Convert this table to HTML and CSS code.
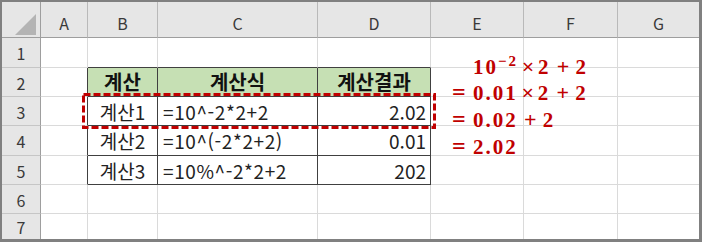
FILE: index.html
```html
<!DOCTYPE html>
<html lang="ko">
<head>
  <meta charset="UTF-8">
  <title>계산 순서</title>
  <link rel="stylesheet" href="styles.css">
</head>
<body>
  <div class="sheet">
    <div class="grid">
      <!-- column headers -->
      <div class="cell corner"><span class="corner-mark"></span></div>
      <div class="cell ch">A</div>
      <div class="cell ch">B</div>
      <div class="cell ch">C</div>
      <div class="cell ch">D</div>
      <div class="cell ch">E</div>
      <div class="cell ch">F</div>
      <div class="cell ch last-col">G</div>

      <!-- row 1 -->
      <div class="cell rh">1</div>
      <div class="cell"></div>
      <div class="cell tt"></div>
      <div class="cell tt"></div>
      <div class="cell tt"></div>
      <div class="cell"></div>
      <div class="cell"></div>
      <div class="cell last-col"></div>

      <!-- row 2 -->
      <div class="cell rh">2</div>
      <div class="cell tl"></div>
      <div class="cell tb th">계산</div>
      <div class="cell tb th">계산식</div>
      <div class="cell tb th">계산결과</div>
      <div class="cell"></div>
      <div class="cell"></div>
      <div class="cell last-col"></div>

      <!-- row 3 -->
      <div class="cell rh">3</div>
      <div class="cell tl"></div>
      <div class="cell tb mid">계산1</div>
      <div class="cell tb formula">=10^-2*2+2</div>
      <div class="cell tb num">2.02</div>
      <div class="cell"></div>
      <div class="cell"></div>
      <div class="cell last-col"></div>

      <!-- row 4 -->
      <div class="cell rh">4</div>
      <div class="cell tl"></div>
      <div class="cell tb mid">계산2</div>
      <div class="cell tb formula">=10^(-2*2+2)</div>
      <div class="cell tb num">0.01</div>
      <div class="cell"></div>
      <div class="cell"></div>
      <div class="cell last-col"></div>

      <!-- row 5 -->
      <div class="cell rh">5</div>
      <div class="cell tl"></div>
      <div class="cell tb mid">계산3</div>
      <div class="cell tb formula">=10%^-2*2+2</div>
      <div class="cell tb num">202</div>
      <div class="cell"></div>
      <div class="cell"></div>
      <div class="cell last-col"></div>

      <!-- row 6 -->
      <div class="cell rh">6</div>
      <div class="cell"></div>
      <div class="cell"></div>
      <div class="cell"></div>
      <div class="cell"></div>
      <div class="cell"></div>
      <div class="cell"></div>
      <div class="cell last-col"></div>

      <!-- row 7 -->
      <div class="cell rh last-row">7</div>
      <div class="cell last-row"></div>
      <div class="cell last-row"></div>
      <div class="cell last-row"></div>
      <div class="cell last-row"></div>
      <div class="cell last-row"></div>
      <div class="cell last-row"></div>
      <div class="cell last-row last-col"></div>
    </div>

    <!-- dashed box around row 3 -->
    <svg class="mark" width="354" height="36" viewBox="0 0 354 36">
      <rect x="1.5" y="1.5" width="351" height="33" fill="none" stroke="#c00000" stroke-width="3" stroke-dasharray="7 3"/>
    </svg>

    <!-- worked steps -->
    <div class="eq">
      <div class="eq-line first"><span class="eq-sign"></span><span class="eq-num">10<sup>−2</sup></span><span class="op op-x">×</span><span class="eq-num">2</span><span class="op op-plus">+</span><span class="eq-num">2</span></div>
      <div class="eq-line"><span class="eq-sign">=</span><span class="eq-num">0.01</span><span class="op op-x">×</span><span class="eq-num">2</span><span class="op op-plus">+</span><span class="eq-num">2</span></div>
      <div class="eq-line"><span class="eq-sign">=</span><span class="eq-num">0.02</span><span class="op op-plus">+</span><span class="eq-num">2</span></div>
      <div class="eq-line"><span class="eq-sign">=</span><span class="eq-num">2.02</span></div>
    </div>
  </div>
</body>
</html>
```

FILE: styles.css
```css
body {
  margin: 0;
  background: #fff;
}
.sheet {
  position: relative;
  width: 702px;
  height: 242px;
  box-sizing: border-box;
  border-style: solid;
  border-color: #808080;
  border-width: 2px 3px 3px 2px;
  background: #fff;
  overflow: hidden;
}
.grid {
  display: grid;
  grid-template-columns: 39px 47px 70px 160px 113px 93px 94px 1fr;
  grid-template-rows: 36px 30px 29px 29px 30px 29px 29px 1fr;
  height: 100%;
  font-family: "Noto Sans CJK KR", "Noto Sans", sans-serif;
  font-size: 19px;
  color: #222;
}
.cell {
  box-sizing: border-box;
  border-right: 1px solid #dadada;
  border-bottom: 1px solid #dadada;
  display: flex;
  align-items: center;
  padding: 0 5px;
  white-space: nowrap;
  line-height: 1;
}
.last-col {
  border-right: none;
}
.last-row {
  border-bottom: none;
}

/* headers */
.ch, .rh, .corner {
  background: #e6e6e6;
  color: #3a3a3a;
  justify-content: center;
  font-size: 16px;
}
.ch {
  border-right-color: #b9b9b9;
  border-bottom-color: #9e9e9e;
  padding-top: 7px;
}
.rh {
  border-right-color: #9e9e9e;
  border-bottom-color: #c6c6c6;
  padding-top: 1px;
}
.corner {
  border-right-color: #9e9e9e;
  border-bottom-color: #9e9e9e;
  position: relative;
}
.corner-mark {
  position: absolute;
  left: 13px;
  top: 12px;
  width: 21px;
  height: 21px;
  background: #b4b4b4;
  clip-path: polygon(100% 0, 100% 100%, 0 100%);
}

/* table B2:D5 */
.tb {
  border-right-color: #404040;
  border-bottom-color: #404040;
}
.tl {
  border-right-color: #404040;
}
.tt {
  border-bottom-color: #404040;
}
.th {
  background: #c6e0b4;
  font-weight: bold;
  font-size: 20px;
  justify-content: center;
  color: #111;
}
.mid {
  justify-content: center;
}
.formula {
  letter-spacing: 0.6px;
}
.num {
  justify-content: flex-end;
  padding-right: 4px;
}

.mark {
  position: absolute;
  left: 80px;
  top: 91px;
}

/* worked steps in red */
.eq {
  position: absolute;
  left: 450px;
  top: 53px;
  font-family: "Liberation Serif", serif;
  font-weight: bold;
  font-size: 21px;
  color: #c00000;
  white-space: nowrap;
}
.eq-line {
  height: 27px;
  line-height: 27px;
}
.eq-line.first {
  height: 24px;
  line-height: 24px;
}
.eq-sign {
  display: inline-block;
  width: 21px;
  font-size: 24px;
}
.eq-num {
  letter-spacing: 2px;
}
.eq-num sup {
  font-size: 15px;
  line-height: 0;
  vertical-align: baseline;
  position: relative;
  top: -8px;
  letter-spacing: 2px;
}
.op {
  display: inline-block;
  text-align: center;
  font-size: 22px;
}
.op-x {
  width: 20px;
}
.op-plus {
  width: 25px;
}
```
